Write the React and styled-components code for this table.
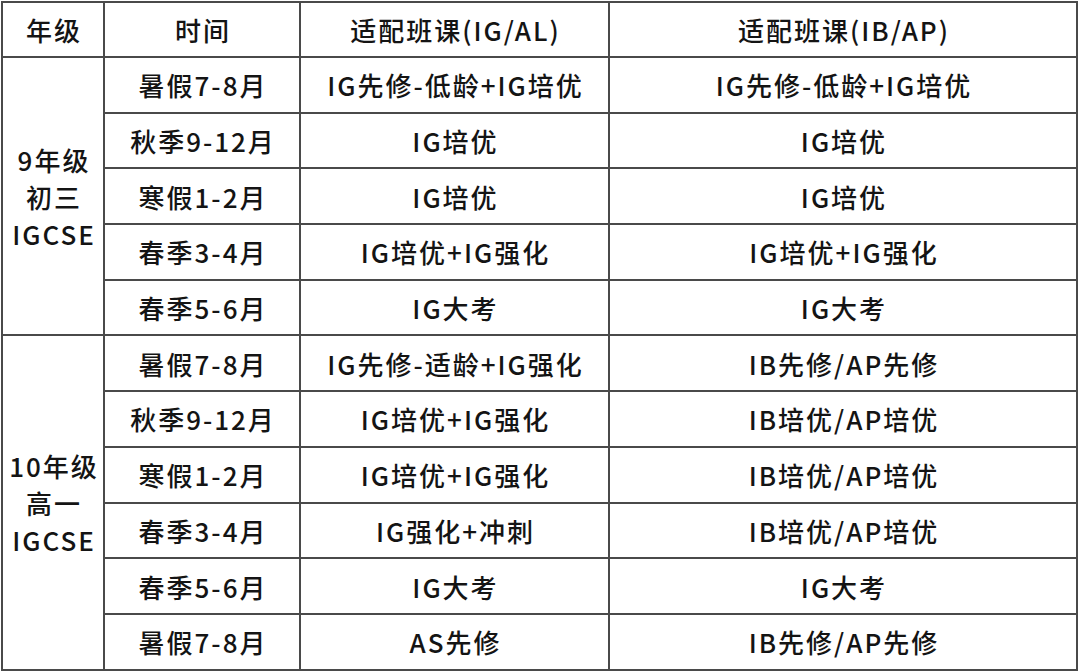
import React from 'react';
import styled, { createGlobalStyle } from 'styled-components';

const GlobalStyle = createGlobalStyle`
  html, body {
    margin: 0;
    padding: 0;
    background: #ffffff;
  }
  body {
    font-family: "Noto Sans CJK SC", "Noto Sans", sans-serif;
    color: #141414;
  }
`;

const Page = styled.div`
  width: 1080px;
  height: 672px;
  overflow: hidden;
  padding: 1px 0 0 1px;
  box-sizing: border-box;
`;

const Table = styled.table`
  border-collapse: collapse;
  table-layout: fixed;
  width: 1075px;
`;

const Col = styled.col`
  width: ${p => p.$w}px;
`;

const Row = styled.tr`
  height: ${p => (p.$head ? 55 : 55.7)}px;
`;

const Cell = styled.td`
  border: 2px solid #4a4a4a;
  padding: 0 0 0 2px;
  text-align: center;
  vertical-align: middle;
  font-size: 26px;
  font-weight: 500;
  letter-spacing: 2px;
  line-height: 37px;
  white-space: nowrap;
`;

const HeadCell = styled(Cell).attrs({ as: 'th' })`
  font-weight: 500;
`;

const grades = [
  {
    label: ['9年级', '初三', 'IGCSE'],
    rows: [
      ['暑假7-8月', 'IG先修-低龄+IG培优', 'IG先修-低龄+IG培优'],
      ['秋季9-12月', 'IG培优', 'IG培优'],
      ['寒假1-2月', 'IG培优', 'IG培优'],
      ['春季3-4月', 'IG培优+IG强化', 'IG培优+IG强化'],
      ['春季5-6月', 'IG大考', 'IG大考'],
    ],
  },
  {
    label: ['10年级', '高一', 'IGCSE'],
    rows: [
      ['暑假7-8月', 'IG先修-适龄+IG强化', 'IB先修/AP先修'],
      ['秋季9-12月', 'IG培优+IG强化', 'IB培优/AP培优'],
      ['寒假1-2月', 'IG培优+IG强化', 'IB培优/AP培优'],
      ['春季3-4月', 'IG强化+冲刺', 'IB培优/AP培优'],
      ['春季5-6月', 'IG大考', 'IG大考'],
      ['暑假7-8月', 'AS先修', 'IB先修/AP先修'],
    ],
  },
];

export default function App() {
  return (
    <Page>
      <GlobalStyle />
      <Table>
        <colgroup>
          <Col $w={102} />
          <Col $w={196} />
          <Col $w={309} />
          <Col $w={468} />
        </colgroup>
        <thead>
          <Row $head>
            <HeadCell>年级</HeadCell>
            <HeadCell>时间</HeadCell>
            <HeadCell>适配班课(IG/AL)</HeadCell>
            <HeadCell>适配班课(IB/AP)</HeadCell>
          </Row>
        </thead>
        <tbody>
          {grades.map((g) =>
            g.rows.map((r, i) => (
              <Row key={g.label[0] + i}>
                {i === 0 && (
                  <Cell rowSpan={g.rows.length}>
                    {g.label.map((l) => (
                      <div key={l}>{l}</div>
                    ))}
                  </Cell>
                )}
                <Cell>{r[0]}</Cell>
                <Cell>{r[1]}</Cell>
                <Cell>{r[2]}</Cell>
              </Row>
            ))
          )}
        </tbody>
      </Table>
    </Page>
  );
}
